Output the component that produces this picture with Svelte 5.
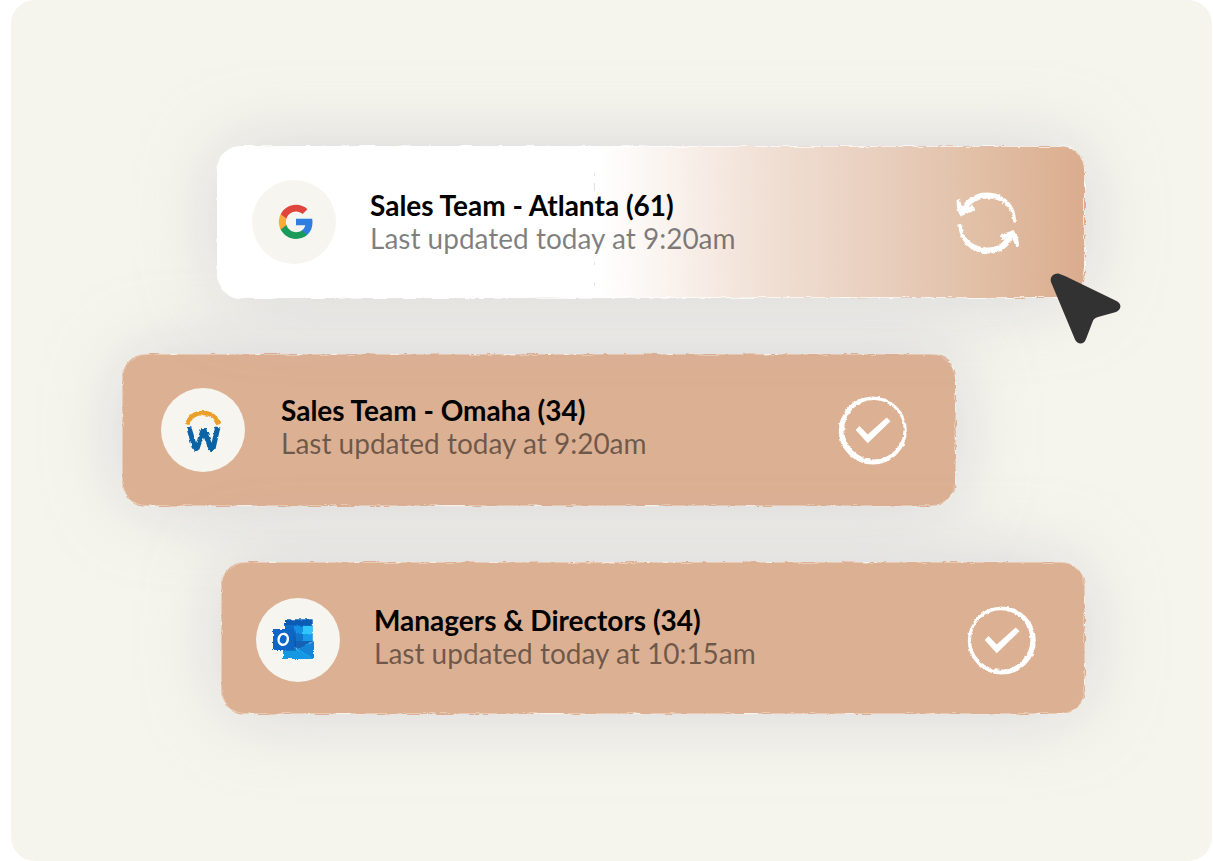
<script lang="ts">
  interface Group {
    name: string;
    count: number;
    updated: string;
    source: 'google' | 'workday' | 'outlook';
    syncing: boolean;
  }

  const groups: Group[] = [
    { name: 'Sales Team - Atlanta', count: 61, updated: '9:20am', source: 'google', syncing: true },
    { name: 'Sales Team - Omaha', count: 34, updated: '9:20am', source: 'workday', syncing: false },
    { name: 'Managers & Directors', count: 34, updated: '10:15am', source: 'outlook', syncing: false },
  ];
</script>

<!-- hand-drawn edge filters -->
<svg class="defs" width="0" height="0" aria-hidden="true">
  <filter id="rough-card" x="-2%" y="-5%" width="104%" height="110%" color-interpolation-filters="sRGB">
    <feTurbulence type="fractalNoise" baseFrequency="0.05 0.12" numOctaves="4" seed="4" />
    <feDisplacementMap in="SourceGraphic" scale="4" xChannelSelector="R" yChannelSelector="G" />
  </filter>
  <filter id="rough-chalk" x="-2%" y="-5%" width="104%" height="110%" color-interpolation-filters="sRGB">
    <feTurbulence type="fractalNoise" baseFrequency="0.05 0.12" numOctaves="4" seed="9" />
    <feDisplacementMap in="SourceGraphic" scale="4" xChannelSelector="R" yChannelSelector="G" />
  </filter>
  <filter id="rough-icon" x="-10%" y="-10%" width="120%" height="120%" color-interpolation-filters="sRGB">
    <feTurbulence type="fractalNoise" baseFrequency="0.25" numOctaves="2" seed="2" />
    <feDisplacementMap in="SourceGraphic" scale="3" xChannelSelector="R" yChannelSelector="G" />
  </filter>
</svg>

<main class="canvas">
  <ul class="groups">
    {#each groups as group}
      <li class="card {group.source}" class:syncing={group.syncing}>
        <span class="surface"></span>
        <svg class="logo" viewBox="0 0 84 84" aria-hidden="true">
          <circle cx="42" cy="42" r="42" fill="#f6f5ef" />
          {#if group.source === 'google'}
            <g transform="translate(25.3 23.1) scale(1.56)">
              <path fill="#2f7de1" d="M22.56 12.25c0-.78-.07-1.53-.2-2.25H12v4.26h5.92c-.26 1.37-1.04 2.53-2.21 3.31v2.77h3.57c2.08-1.92 3.28-4.74 3.28-8.09z" />
              <path fill="#1a9b5b" d="M12 23c2.97 0 5.46-.98 7.28-2.66l-3.57-2.77c-.98.66-2.23 1.06-3.71 1.06-2.86 0-5.29-1.93-6.16-4.53H2.18v2.84C3.99 20.53 7.7 23 12 23z" />
              <path fill="#fbad33" d="M5.84 14.09c-.22-.66-.35-1.36-.35-2.09s.13-1.43.35-2.09V7.07H2.18C1.43 8.55 1 10.22 1 12s.43 3.45 1.18 4.93l2.85-2.22.81-.62z" />
              <path fill="#df453c" d="M12 5.38c1.62 0 3.06.56 4.21 1.64l3.15-3.15C17.45 2.09 14.97 1 12 1 7.7 1 3.99 3.47 2.18 7.07l3.66 2.84c.87-2.6 3.3-4.53 6.16-4.53z" />
            </g>
          {:else if group.source === 'workday'}
            <g class="sketched" fill="none">
              <path stroke="#eba02b" stroke-width="4.4" d="M26.200 36.500C28.500 29 34.500 25 42 25S55.200 29 57.500 36.500" />
              <path stroke="#0b63a5" stroke-width="5.200" stroke-linejoin="bevel" d="M27.600 38.800L34 60.500 36 60.500 42.500 41 50 60.500 52 60.500 56.800 39" />
            </g>
          {:else}
            <g class="sketched">
              <path fill="#0f6cc6" d="M29 21.500h27.500v21H29z" />
              <path fill="#0b5cb5" d="M29 21.500h27.500v5.500H29z" />
              <path fill="#1490e6" d="M38 28h9v8h-9z" />
              <path fill="#2fc6fb" d="M47 28h9.500v8H47z" />
              <path fill="#1374cd" d="M38 36h9v8h-9z" />
              <path fill="#1a9bea" d="M47 36h9.500v8H47z" />
              <path fill="#1262b6" d="M29 43h28l-12 8-16-4z" />
              <path fill="#1aa9ef" d="M27 47l16 4 15-8v18H27z" />
              <path fill="#1684d6" d="M58 43.500v17.500L42 51z" />
              <path fill="#0f7fd4" d="M27 52h13l18 9H27z" opacity=".4" />
              <path fill="#0a4687" d="M29 33h11v20H29z" opacity=".4" />
              <path fill="#0d66c6" d="M17 31h21.500v21H17z" />
            </g>
            <ellipse cx="27.300" cy="41.300" rx="4.600" ry="5.500" fill="none" stroke="#fff" stroke-width="2.500" transform="rotate(15 27 41)" />
          {/if}
        </svg>

        <div class="info">
          <h2>{group.name} ({group.count})</h2>
          <p>Last updated today at {group.updated}</p>
        </div>

        {#if group.syncing}
          <button class="status" aria-label="Sync {group.name}">
            <svg viewBox="0 0 70 70" aria-hidden="true">
              <g class="sketched" fill="#fff">
                <path d="M61.300 34.500C61 20 50 10.500 36 10.500 25.500 10.500 18 15 14 23.500L8.500 22C13 11 23 4.500 35 4.500 52 4.500 65 18 64 34.500z" />
                <path d="M4.500 12.500L7.500 10.500 9.500 17 11.500 20.500 20.500 18 22.500 22.500 8.500 28.500 5 20z" />
                <path d="M6.500 36L9.200 36C10.500 50 21 59.500 36 59.500 45.500 59.500 52 54.500 56 46.500L62 48.500C57 59.500 48 66 36 65.500 19 65.500 6.500 53 6.500 36z" />
                <path d="M48 47.500L61.500 42 66 49.500 67 57 63.700 59 60.500 50.500 49.500 52z" />
              </g>
            </svg>
          </button>
          <span class="seam"></span>
          <svg class="cursor" viewBox="0 0 74 74" aria-hidden="true">
            <path fill="#323232" d="M2 10C.500 5 4.500 1 10 1.700L16 4 67.500 29C73.500 32 72 38 67 40L49 45C46 46 44.500 47 43.500 50L37 67C35 73 28.500 73 26 67.500z" />
          </svg>
        {:else}
          <svg class="status" viewBox="0 0 70 70" role="img" aria-label="Up to date">
            <g fill="#fff">
              {#if group.source === 'workday'}
                <path class="sketched" fill-rule="evenodd" d="M.800 34.500a34 34 0 1 0 68 0a34 34 0 1 0 -68 0zM6.200 33.700a29.700 29.700 0 1 0 59.400 0a29.700 29.700 0 1 0 -59.400 0z" />
              {:else}
                <path class="sketched" fill-rule="evenodd" d="M.800 34.500a34 34 0 1 0 68 0a34 34 0 1 0 -68 0zM4 34a29.700 29.700 0 1 0 59.400 0a29.700 29.700 0 1 0 -59.400 0z" />
              {/if}
              <path d="M21.500 30L29.700 38.500 48.700 21.500 52.500 25.300 29.700 47.300 17.700 34z" />
            </g>
          </svg>
        {/if}
      </li>
    {/each}
  </ul>
</main>

<style>
  :global(body) {
    margin: 0;
    background: #fff;
  }

  .defs {
    position: absolute;
  }

  .canvas {
    box-sizing: border-box;
    min-height: 100vh;
    margin: 0 1px 0 11px;
    padding: 146px 127px 146px 111px;
    border-radius: 24px;
    background: #f6f5ed;
    font-family: Lato, "Open Sans", sans-serif;
  }

  .groups {
    display: flex;
    flex-direction: column;
    gap: 56px;
    margin: 0;
    padding: 0;
    list-style: none;
  }

  .card {
    position: relative;
    display: flex;
    align-items: center;
    gap: 34px;
    box-sizing: border-box;
    min-height: 152px;
    padding: 0 48px 0 35px;
    border-radius: 24px;
    box-shadow: 0 0 80px rgba(156, 154, 178, 0.34);
  }

  .card.google {
    z-index: 1;
    margin-left: 95px;
    padding-right: 63px;
  }

  .card.workday {
    margin-right: 129px;
    padding-left: 39px;
    gap: 36px;
  }

  .card.outlook {
    margin-left: 99px;
    padding-top: 4px;
  }

  .surface,
  .surface::before,
  .surface::after {
    position: absolute;
    inset: 0;
    border-radius: 24px;
  }

  .surface::before {
    content: '';
    background: #dcb093;
    filter: url(#rough-card);
  }

  .syncing .surface::before {
    background: linear-gradient(90deg, #fff 44%, #f9f1ec 53%, #f1e0d5 63%, #e8cebd 77%, #e1bfa5 88%, #dbac8e 100%);
  }

  .surface::after {
    content: '';
    border: 1px solid rgba(246, 235, 224, 0.45);
    filter: url(#rough-chalk);
  }

  .syncing .surface::after {
    border-color: rgba(255, 255, 255, 0.7);
  }

  .logo {
    position: relative;
    flex: none;
    width: 84px;
    height: 84px;
  }

  .info {
    position: relative;
    flex: 1;
    min-width: 0;
  }

  .card:not(.syncing) .info {
    margin-bottom: 6px;
  }

  h2,
  p {
    margin: 0;
    font-size: 28px;
    line-height: 33px;
  }

  h2 {
    color: #000;
    font-weight: 700;
  }

  p {
    color: rgba(0, 0, 0, 0.5);
    font-weight: 400;
  }

  .status {
    position: relative;
    flex: none;
    width: 70px;
    height: 70px;
    margin-top: 2px;
    padding: 0;
    border: 0;
    background: none;
  }

  .status svg {
    display: block;
  }

  .sketched {
    filter: url(#rough-icon);
  }

  .seam {
    position: absolute;
    top: 18%;
    bottom: 8%;
    left: 43.4%;
    width: 1px;
    background: linear-gradient(#e6e4e1 3%, transparent 3% 9%, #e6e4e1 9% 16%, transparent 16% 79%, #e6e4e1 79% 81%, transparent 81% 97%, #e6e4e1 97%);
  }

  .cursor {
    position: absolute;
    right: -38px;
    bottom: -48px;
    width: 74px;
    height: 74px;
  }
</style>
